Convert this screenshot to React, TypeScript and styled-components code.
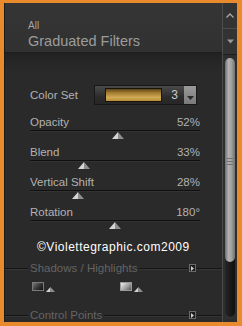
import styled, { createGlobalStyle } from "styled-components";

const GlobalStyle = createGlobalStyle`
  html, body {
    margin: 0;
    padding: 0;
    background: #e98a2d;
  }
  body {
    font-family: "Liberation Sans", Arial, sans-serif;
  }
`;

const sliders = [
  { label: "Opacity", value: 52, text: "52%" },
  { label: "Blend", value: 32, text: "33%" },
  { label: "Vertical Shift", value: 28, text: "28%" },
  { label: "Rotation", value: 50, text: "180°" },
];

const Thumb = ({ small }: { small?: boolean }) => {
  const w = small ? 9 : 12;
  const h = small ? 5 : 7;
  return (
    <svg width={w} height={h} viewBox={`0 0 ${w} ${h}`}>
      <polygon points={`${w / 2},0 0,${h} ${w / 2},${h}`} fill="#d4d4d4" />
      <polygon points={`${w / 2},0 ${w},${h} ${w / 2},${h}`} fill="#8e8e8e" />
    </svg>
  );
};

const App = () => {
  return (
    <>
      <GlobalStyle />
      <Frame>
        <Main>
          <Header>
            <Category>All</Category>
            <Title>Graduated Filters</Title>
          </Header>
          <Content>
            <ColorRow>
              <Label>Color Set</Label>
              <Dropdown>
                <Swatch />
                <DropValue>3</DropValue>
                <DropButton>
                  <svg width="7" height="4" viewBox="0 0 7 4">
                    <polygon points="0,0 7,0 3.5,4" fill="#2a2a2a" />
                  </svg>
                </DropButton>
              </Dropdown>
            </ColorRow>

            {sliders.map((s) => (
              <SliderRow key={s.label}>
                <LabelLine>
                  <Label>{s.label}</Label>
                  <Label>{s.text}</Label>
                </LabelLine>
                <TrackLine />
                <ThumbHolder style={{ marginLeft: `calc(${s.value}% - 6px)` }}>
                  <Thumb />
                </ThumbHolder>
              </SliderRow>
            ))}

            <Copyright>©Violettegraphic.com2009</Copyright>

            <Section>
              <SectionLine $w={23} />
              <SectionTitle>Shadows / Highlights</SectionTitle>
              <SectionLine />
              <ExpandButton>
                <svg width="3" height="5" viewBox="0 0 3 5">
                  <polygon points="0,0 3,2.5 0,5" fill="#cfcfcf" />
                </svg>
              </ExpandButton>
              <SectionLine $w={25} />
            </Section>

            <ToneRow>
              <ToneSlider>
                <ToneSwatch $light={false} />
                <ToneTrack $w={52}>
                  <TrackLine />
                  <Thumb small />
                </ToneTrack>
              </ToneSlider>
              <ToneSlider>
                <ToneSwatch $light />
                <ToneTrack $w={56}>
                  <TrackLine />
                  <Thumb small />
                </ToneTrack>
              </ToneSlider>
            </ToneRow>

            <Section $last>
              <SectionLine $w={23} />
              <SectionTitle>Control Points</SectionTitle>
              <SectionLine />
              <ExpandButton>
                <svg width="3" height="5" viewBox="0 0 3 5">
                  <polygon points="0,0 3,2.5 0,5" fill="#cfcfcf" />
                </svg>
              </ExpandButton>
              <SectionLine $w={25} />
            </Section>
          </Content>
        </Main>

        <ScrollColumn>
          <ScrollButton>
            <svg width="8" height="5" viewBox="0 0 8 5">
              <polyline points="0.5,4.5 4,1 7.5,4.5" fill="none" stroke="#a8a8a8" strokeWidth="1.3" />
            </svg>
          </ScrollButton>
          <ScrollButton $down>
            <svg width="7" height="5" viewBox="0 0 7 5">
              <polygon points="0,0.5 7,0.5 3.5,4.5" fill="#9a9a9a" />
            </svg>
          </ScrollButton>
          <ScrollTrack>
            <ScrollThumb>
              <Grip />
              <Grip />
              <Grip />
            </ScrollThumb>
          </ScrollTrack>
        </ScrollColumn>
      </Frame>
    </>
  );
};

export default App;

const Frame = styled.div`
  box-sizing: border-box;
  width: 242px;
  height: 326px;
  border-style: solid;
  border-color: #e98a2d;
  border-width: 3px 5px 4px 4px;
  display: flex;
  background: #2a2a2a;
`;

const Main = styled.div`
  flex: 1;
  display: flex;
  flex-direction: column;
  border-left: 1px solid #1b1b1b;
  min-width: 0;
`;

const Header = styled.div`
  box-sizing: border-box;
  height: 52px;
  padding: 17px 0 0 23px;
  background: linear-gradient(#353535, #313131);
  border-bottom: 1px solid #1e1e1e;
`;

const Category = styled.div`
  font-size: 10px;
  line-height: 12px;
  color: #a4a4a4;
`;

const Title = styled.div`
  margin-top: 1px;
  font-size: 14.5px;
  line-height: 16px;
  color: #9c9c9c;
`;

const Content = styled.div`
  flex: 1;
  padding: 32px 22px 0 25px;
  background: linear-gradient(#222222, #2a2a2a 18px);
`;

const ColorRow = styled.div`
  display: flex;
  align-items: center;
  height: 20px;
`;

const Label = styled.span`
  font-size: 11.5px;
  line-height: 14px;
  color: #b2b2b2;
  white-space: nowrap;
`;

const Dropdown = styled.div`
  box-sizing: border-box;
  margin-left: auto;
  margin-right: 3px;
  width: 103px;
  height: 20px;
  display: flex;
  align-items: center;
  border: 1px solid #181818;
  background: linear-gradient(#4a4a4a, #2c2c2c 60%, #262626);
`;

const Swatch = styled.div`
  box-sizing: border-box;
  margin-left: 10px;
  width: 58px;
  height: 14px;
  border: 1px solid #1a1408;
  background: linear-gradient(#5a4418, #a07a30 30%, #d2aa55 70%, #b58c3a);
`;

const DropValue = styled.span`
  margin-left: 9px;
  width: 13px;
  font-size: 12px;
  color: #c8c8c8;
`;

const DropButton = styled.div`
  margin-left: auto;
  width: 12px;
  height: 18px;
  display: flex;
  align-items: center;
  justify-content: center;
  padding-top: 6px;
  box-sizing: border-box;
  background: linear-gradient(#9a9a9a, #7a7a7a);
`;

const SliderRow = styled.div`
  display: flex;
  flex-direction: column;
  margin-top: 10px;

  & + & {
    margin-top: 6px;
  }
`;

const LabelLine = styled.div`
  display: flex;
  justify-content: space-between;
  height: 14px;
`;

const TrackLine = styled.div`
  margin-top: 1px;
  height: 1px;
  background: #101010;
  box-shadow: 0 1px 0 #333333;
`;

const ThumbHolder = styled.div`
  display: flex;
  margin-top: 1px;
  height: 7px;
`;

const Copyright = styled.div`
  margin-top: 10px;
  padding-left: 7px;
  font-size: 12px;
  line-height: 16px;
  letter-spacing: 0.5px;
  color: #ffffff;
`;

const Section = styled.div<{ $last?: boolean }>`
  display: flex;
  align-items: center;
  height: 14px;
  margin: ${(p) => (p.$last ? "16px" : "6px")} -22px 0 -25px;
`;

const SectionLine = styled.div<{ $w?: number }>`
  height: 1px;
  background: #141414;
  box-shadow: 0 1px 0 #363636;
  ${(p) => (p.$w ? `width: ${p.$w}px; flex: none;` : "flex: 1;")}
`;

const SectionTitle = styled.span`
  padding: 0 2px;
  font-size: 11.5px;
  color: #646464;
  white-space: nowrap;
`;

const ExpandButton = styled.div`
  box-sizing: border-box;
  width: 7px;
  height: 8px;
  margin: 0 1px;
  display: flex;
  align-items: center;
  justify-content: center;
  border: 1px solid #6a6a6a;
  background: #1c1c1c;
`;

const ToneRow = styled.div`
  display: flex;
  gap: 22px;
  margin: 7px 0 0 2px;
  height: 10px;
`;

const ToneSlider = styled.div`
  display: flex;
  gap: 2px;
`;

const ToneSwatch = styled.div<{ $light: boolean }>`
  box-sizing: border-box;
  width: 12px;
  height: 9px;
  border: 1px solid ${(p) => (p.$light ? "#9a9a9a" : "#7a7a7a")};
  background: ${(p) =>
    p.$light
      ? "linear-gradient(135deg, #f0f0f0, #9a9a9a 60%, #555)"
      : "linear-gradient(135deg, #777, #333 55%, #111)"};
`;

const ToneTrack = styled.div<{ $w: number }>`
  width: ${(p) => p.$w}px;
  display: flex;
  flex-direction: column;
  align-items: flex-start;
  padding-top: 3px;
`;

const ScrollColumn = styled.div`
  width: 14px;
  display: flex;
  flex-direction: column;
  align-items: center;
  border-left: 1px solid #4c4c4c;
  background: #2e2e2e;
`;

const ScrollButton = styled.div<{ $down?: boolean }>`
  box-sizing: border-box;
  align-self: stretch;
  height: 26px;
  display: flex;
  align-items: center;
  justify-content: center;
  border-bottom: 1px solid ${(p) => (p.$down ? "#1e1e1e" : "#4c4c4c")};
  background: #333333;
`;

const ScrollTrack = styled.div`
  flex: 1;
  width: 10px;
  margin: 3px 0 4px;
  border-radius: 5px;
  background: linear-gradient(90deg, #262626, #1a1a1a 50%, #101010);
  box-shadow: inset 0 -1px 0 #3a3a3a;
  display: flex;
  flex-direction: column;
`;

const ScrollThumb = styled.div`
  height: 204px;
  border-radius: 5px;
  background: linear-gradient(90deg, #6e6e6e, #b2b2b2 35%, #a0a0a0 65%, #707070);
  display: flex;
  flex-direction: column;
  align-items: center;
  padding-top: 100px;
  box-sizing: border-box;
  gap: 2px;
`;

const Grip = styled.div`
  width: 6px;
  height: 1px;
  background: #707070;
`;
